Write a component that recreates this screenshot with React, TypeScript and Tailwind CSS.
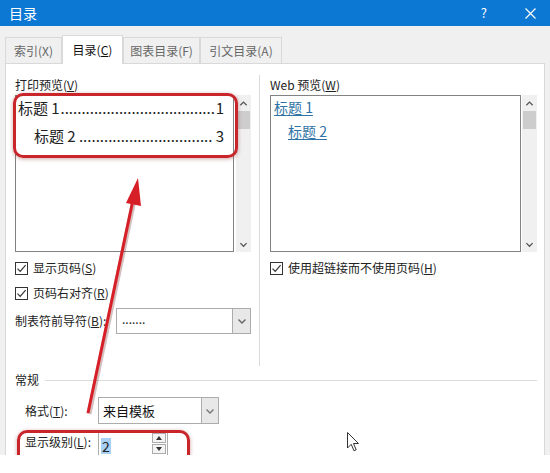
import React from "react"

const fontCls = "font-['Noto_Sans_CJK_SC','Microsoft_YaHei',sans-serif]"

function Checkbox({ children }: { children: React.ReactNode }) {
  return (
    <div className="flex items-center h-[18px]">
      <span className="w-[13px] h-[13px] border border-[#333] bg-white flex items-center justify-center">
        <svg width="11" height="11" viewBox="0 0 11 11">
          <path d="M1.5 5.6 L4.2 8.3 L9.6 2.2" fill="none" stroke="#333" strokeWidth="1.2" />
        </svg>
      </span>
      <span className="ml-[5px] text-[12px] text-[#222]">{children}</span>
    </div>
  )
}

function Chevron({ up = false, size = 9, color = "#555" }: { up?: boolean; size?: number; color?: string }) {
  return (
    <svg width={size} height={size} viewBox="0 0 10 10">
      <path d={up ? "M1.5 7 L5 3.5 L8.5 7" : "M1.5 3.5 L5 7 L8.5 3.5"} fill="none" stroke={color} strokeWidth="1.4" />
    </svg>
  )
}

function ScrollBar() {
  return (
    <div className="w-[15px] h-[157px] bg-[#f0f0f0] flex flex-col">
      <div className="h-[16px] flex items-center justify-center">
        <Chevron up />
      </div>
      <div className="h-[18px] mx-[1px] bg-[#cdcdcd]" />
      <div className="flex-1" />
      <div className="h-[16px] flex items-center justify-center">
        <Chevron />
      </div>
    </div>
  )
}

function Tab({ label, active = false, width }: { label: React.ReactNode; active?: boolean; width: string }) {
  if (active) {
    return (
      <div className={`${width} h-[29px] -mb-[1px] relative z-10 bg-white border border-b-0 border-[#d9d9d9] flex items-center justify-center text-[12px] text-[#111]`}>
        {label}
      </div>
    )
  }
  return (
    <div className={`${width} h-[26px] bg-[#f0f0f0] border-t border-l border-r border-[#d9d9d9] flex items-center justify-center text-[12px] text-[#666]`}>
      {label}
    </div>
  )
}

export default function App() {
  return (
    <div className={`w-[550px] h-[473px] bg-white ${fontCls}`}>
      <div className="h-[455px] relative overflow-hidden">
        <div className="h-[455px] bg-[#f0f0f0] flex flex-col">
          {/* title bar */}
          <div className="h-[26px] bg-[#0d78d3] flex items-center pl-[9px] pr-[14px] text-white shrink-0">
            <span className="text-[14px]">目录</span>
            <span className="ml-auto text-[13px] mr-[38px]">?</span>
            <svg width="11" height="11" viewBox="0 0 11 11">
              <path d="M0.5 0.5 L10.5 10.5 M10.5 0.5 L0.5 10.5" stroke="#fff" strokeWidth="1.2" />
            </svg>
          </div>

          {/* tabs */}
          <div className="h-[37px] flex items-end pl-[5px] shrink-0">
            <Tab width="w-[57px]" label={<span>索引(X)</span>} />
            <Tab width="w-[61px]" active label={<span>目录(<u>C</u>)</span>} />
            <Tab width="w-[77px]" label={<span>图表目录(F)</span>} />
            <Tab width="w-[82px]" label={<span>引文目录(A)</span>} />
          </div>

          {/* tab panel */}
          <div className="flex-1 mx-[5px] bg-white border border-[#d9d9d9] pl-[9px] text-[#222]">
            <div className="mt-[11px] h-[291px] flex">
              {/* print preview */}
              <div className="w-[236px]">
                <div className="h-[20px] leading-[20px] text-[12px]">
                  打印预览(<u>V</u>)
                </div>
                <div className="flex h-[157px]">
                  <div className="w-[219px] border border-[#828282] bg-white pt-[1px] pr-[9px] text-[15px] text-[#222]">
                    <div className="h-[22px] flex items-center justify-between pl-[2px] whitespace-nowrap">
                      <span>标题 1</span>
                      <span>.....................................</span>
                      <span>1</span>
                    </div>
                    <div className="h-[22px] mt-[6px] flex items-center justify-between pl-[18px] whitespace-nowrap">
                      <span>标题 2</span>
                      <span>................................</span>
                      <span>3</span>
                    </div>
                  </div>
                  <div className="ml-[2px]">
                    <ScrollBar />
                  </div>
                </div>
                <div className="mt-[7px]">
                  <Checkbox>显示页码(<u>S</u>)</Checkbox>
                </div>
                <div className="mt-[7px]">
                  <Checkbox>页码右对齐(<u>R</u>)</Checkbox>
                </div>
                <div className="mt-[6px] h-[26px] flex items-center">
                  <span className="text-[12px]">制表符前导符(<u>B</u>):</span>
                  <div className="ml-auto w-[135px] h-[26px] border border-[#acacac] flex">
                    <div className="flex-1 pl-[5px] text-[12px] leading-[20px]">.......</div>
                    <div className="w-[18px] bg-[#e8e8e8] border-l border-[#acacac] flex items-center justify-center">
                      <Chevron size={10} color="#666" />
                    </div>
                  </div>
                </div>
              </div>

              {/* web preview */}
              <div className="ml-[8px] border-l border-[#dadada] pl-[10px]">
                <div className="h-[20px] leading-[20px] text-[12px]">
                  Web 预览(<u>W</u>)
                </div>
                <div className="flex h-[157px]">
                  <div className="w-[251px] border border-[#828282] bg-white text-[14px] text-[#2f73a6]">
                    <div className="h-[20px] mt-[1px] pl-[3px] flex items-center">
                      <span className="underline underline-offset-2">标题 1</span>
                    </div>
                    <div className="h-[20px] mt-[4px] pl-[17px] flex items-center">
                      <span className="underline underline-offset-2">标题 2</span>
                    </div>
                  </div>
                  <div className="ml-[1px]">
                    <ScrollBar />
                  </div>
                </div>
                <div className="mt-[7px]">
                  <Checkbox>使用超链接而不使用页码(<u>H</u>)</Checkbox>
                </div>
              </div>
            </div>

            {/* general */}
            <div className="mt-[6px] h-[16px] flex items-center pr-[7px]">
              <span className="text-[12px]">常规</span>
              <div className="flex-1 ml-[6px] border-t border-[#dcdcdc]" />
            </div>

            <div className="mt-[9px] pl-[10px] flex items-center h-[27px]">
              <span className="w-[73px] text-[12px]">格式(<u>T</u>):</span>
              <div className="w-[121px] h-[27px] border border-[#acacac] flex">
                <div className="flex-1 pl-[4px] text-[13px] leading-[25px] text-[#111]">来自模板</div>
                <div className="w-[17px] bg-[#e8e8e8] border-l border-[#acacac] flex items-center justify-center">
                  <Chevron size={10} color="#777" />
                </div>
              </div>
            </div>

            <div className="mt-[7px] pl-[10px] flex items-start">
              <span className="w-[73px] text-[12px] leading-[20px] pt-[1px]">显示级别(<u>L</u>):</span>
              <div className="w-[70px] h-[26px] border border-[#acacac] flex">
                <div className="flex-1 pl-[2px] pt-[1px]">
                  <span className="bg-[#a8d1f3] text-[14px] leading-[16px] px-[1px] inline-block">2</span>
                </div>
                <div className="w-[14px] mr-[1px] mt-[1px] flex flex-col gap-[1px]">
                  <div className="h-[10px] border border-[#acacac] bg-[#f4f4f4] flex items-center justify-center">
                    <svg width="6" height="4" viewBox="0 0 6 4"><path d="M0 4 L3 0 L6 4 Z" fill="#333" /></svg>
                  </div>
                  <div className="h-[10px] border border-[#acacac] bg-[#f4f4f4] flex items-center justify-center">
                    <svg width="6" height="4" viewBox="0 0 6 4"><path d="M0 0 L3 4 L6 0 Z" fill="#333" /></svg>
                  </div>
                </div>
              </div>
            </div>
          </div>
        </div>

        {/* annotations laid over the screenshot */}
        <div className="absolute left-[13px] top-[93px] w-[225px] h-[65px] rounded-[10px] border-[3px] border-[#c8262b] shadow-[0_1px_4px_rgba(120,0,0,0.35)]" />
        <div className="absolute left-[17px] top-[430px] w-[173px] h-[60px] rounded-[10px] border-[3px] border-[#c8262b] shadow-[0_1px_4px_rgba(120,0,0,0.35)]" />
        <svg className="absolute left-0 top-0 pointer-events-none" width="550" height="455" viewBox="0 0 550 455">
          <line x1="89" y1="414" x2="134" y2="200" stroke="rgba(90,0,0,0.25)" strokeWidth="5" />
          <line x1="88" y1="413" x2="133" y2="200" stroke="#d61f26" strokeWidth="3" />
          <path d="M138 178 L126 203 L141 206 Z" fill="#d61f26" />
        </svg>
        <svg className="absolute left-[347px] top-[432px]" width="13" height="21" viewBox="0 0 13 21">
          <path d="M0.5 0.5 L0.5 16 L4.2 12.3 L7 18.8 L9.2 17.8 L6.5 11.5 L11.5 11.5 Z" fill="#fff" stroke="#333" strokeWidth="1" />
        </svg>
      </div>
    </div>
  )
}
